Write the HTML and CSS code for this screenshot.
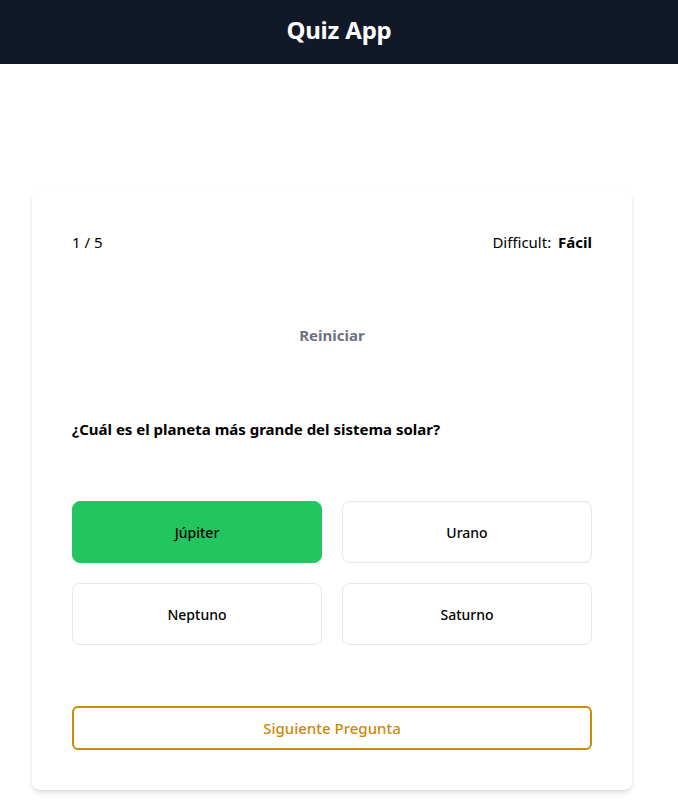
FILE: index.html
```html
<!DOCTYPE html>
<html lang="es">
<head>
<meta charset="utf-8">
<title>Quiz App</title>
<link rel="stylesheet" href="styles.css">
</head>
<body>
<header class="topbar"><h1 class="title">Quiz App</h1></header>
<main class="main">
  <section class="card">
    <div class="meta">
      <span class="count">1 / 5</span>
      <span class="difficulty">Difficult: <strong>Fácil</strong></span>
    </div>
    <div class="restart-wrap"><button class="restart">Reiniciar</button></div>
    <h2 class="question">¿Cuál es el planeta más grande del sistema solar?</h2>
    <div class="options">
      <button class="option correct">Júpiter</button>
      <button class="option">Urano</button>
      <button class="option">Neptuno</button>
      <button class="option">Saturno</button>
    </div>
    <button class="next">Siguiente Pregunta</button>
  </section>
</main>
</body>
</html>
```
FILE: styles.css
```css
* { box-sizing: border-box; }
html, body { margin: 0; padding: 0; background: #fff; }
body { font-family: "Noto Sans", "Open Sans", sans-serif; color: #000; }
.topbar { height: 64px; background: #111827; display: flex; align-items: center; justify-content: center; padding-bottom: 4px; }
.title { margin: 0; color: #fff; font-size: 24px; font-weight: 700; line-height: 32px; letter-spacing: -0.2px; }
.main { padding: 126px 32px 20px; display: flex; justify-content: flex-start; }
.card { width: 600px; flex: none; background: #fff; border-radius: 8px; padding: 40px; box-shadow: 0 4px 6px -1px rgba(30,41,80,.12), 0 2px 4px -2px rgba(30,41,80,.12), 0 0 2px rgba(0,0,0,.04); }
.meta { display: flex; justify-content: space-between; font-size: 15px; line-height: 24px; }
.difficulty strong { font-weight: 700; margin-left: 3px; }
.restart-wrap { display: flex; justify-content: center; margin-top: 61px; }
.restart { border: 0; background: none; font: inherit; font-size: 15px; font-weight: 700; color: #6b7280; padding: 8px 16px; line-height: 24px; cursor: pointer; }
.question { margin: 62px 0 0; font-size: 15px; font-weight: 700; line-height: 24px; }
.options { margin-top: 60px; display: grid; grid-template-columns: 1fr 1fr; gap: 20px; }
.option { height: 62px; border: 1px solid #e5e7eb; border-radius: 8px; background: #fff; font: inherit; font-size: 14px; font-weight: 500; color: #000; cursor: pointer; }
.option.correct { background: #22c55e; border-color: #22c55e; }
.next { display: block; width: 100%; margin-top: 61px; height: 44px; border: 2px solid #ca8a04; border-radius: 6px; background: #fff; color: #ca8a04; font: inherit; font-size: 15px; font-weight: 500; cursor: pointer; }
```
